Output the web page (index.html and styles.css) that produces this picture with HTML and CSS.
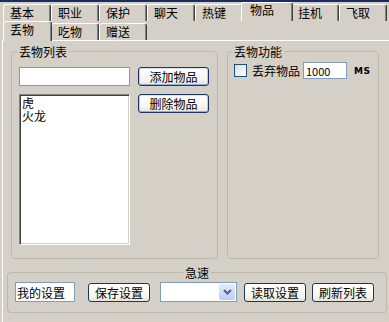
FILE: index.html
```html
<!DOCTYPE html>
<html>
<head>
    <meta charset="utf-8">
    <title>物品设置</title>
    <link rel="stylesheet" href="styles.css">
</head>
<body>
    <div class="titlebar"></div>

    <div class="tabs outer">
        <div class="tab">基本</div>
        <div class="tab">职业</div>
        <div class="tab">保护</div>
        <div class="tab">聊天</div>
        <div class="tab">热键</div>
        <div class="tab active">物品</div>
        <div class="tab">挂机</div>
        <div class="tab">飞取</div>
    </div>

    <div class="tabs inner">
        <div class="tab active">丢物</div>
        <div class="tab">吃物</div>
        <div class="tab">赠送</div>
    </div>

    <div class="page">
        <div class="groups">
            <fieldset class="group list-group">
                <legend>丢物列表</legend>
                <div class="list-grid">
                    <input class="field item-name" type="text">
                    <button class="btn focus">添加物品</button>
                    <div class="listbox">
                        <div>虎</div>
                        <div>火龙</div>
                    </div>
                    <button class="btn focus">删除物品</button>
                </div>
            </fieldset>

            <fieldset class="group func-group">
                <legend>丢物功能</legend>
                <div class="drop-row">
                    <span class="check"></span>
                    <span class="drop-label">丢弃物品</span>
                    <input class="field delay" type="text" value="1000">
                    <span class="unit">MS</span>
                </div>
            </fieldset>
        </div>

        <fieldset class="group speed">
            <legend>急速</legend>
            <div class="bottom-row">
                <input class="field config-name" type="text" value="我的设置">
                <button class="btn">保存设置</button>
                <div class="combo">
                    <span class="combo-btn">
                        <svg width="9" height="6" viewBox="0 0 9 6"><path d="M1 1 L4.5 4.5 L8 1" fill="none" stroke="#4d6185" stroke-width="2"/></svg>
                    </span>
                </div>
                <button class="btn">读取设置</button>
                <button class="btn">刷新列表</button>
            </div>
        </fieldset>
    </div>
</body>
</html>
```

FILE: styles.css
```css
* {
    box-sizing: border-box;
}

body {
    margin: 0;
    width: 389px;
    height: 322px;
    overflow: hidden;
    background-color: #d4d0c8;
    font-family: "Noto Sans CJK SC", "Liberation Sans", sans-serif;
    font-size: 12px;
    color: #000;
}

.titlebar {
    height: 2px;
    background-color: #1a2d63;
}

/* tab strips */
.tabs {
    display: flex;
    align-items: flex-start;
    padding-left: 3px;
}

.tab {
    width: 48px;
    border-top: 1px solid #fff;
    border-left: 1px solid #fff;
    border-right: 1px solid #404040;
    border-radius: 3px 3px 0 0;
    box-shadow: inset -1px 0 #808080;
    background-color: #d4d0c8;
    line-height: 12px;
    padding-left: 6px;
}

.outer .tab {
    margin-top: 2px;
    height: 17px;
    padding-top: 2px;
}

.outer .tab.active {
    margin: 0 -2px;
    width: 52px;
    height: 19px;
    padding-top: 1px;
    padding-left: 8px;
    position: relative;
    z-index: 1;
}

.inner .tab {
    margin-top: 2px;
    height: 17px;
    padding-top: 2px;
}

.inner .tab.active {
    margin: 0 -1px -1px 0;
    width: 49px;
    height: 20px;
    padding-top: 2px;
    position: relative;
    z-index: 1;
}

/* page body */
.page {
    margin-left: 2px;
    height: 282px;
    border-top: 1px solid #fff;
    border-left: 1px solid #fff;
}

.groups {
    display: flex;
    gap: 9px;
    margin: 3px 0 0 8px;
}

.group {
    margin: 0;
    min-width: 0;
    border: 1px solid #bcb8ae;
    border-radius: 4px;
}

.group legend {
    padding: 0 2px;
    margin-left: -2px;
    line-height: 15px;
}

.list-group {
    width: 207px;
    padding: 8px 8px 13px 7px;
}

.func-group {
    width: 152px;
    padding: 3px 6px 0 6px;
}

.list-grid {
    display: grid;
    grid-template-columns: 111px 71px;
    grid-template-rows: 19px 151px;
    column-gap: 8px;
    row-gap: 8px;
}

.field {
    display: block;
    margin: 0;
    border: 1px solid #7f9db9;
    background-color: #fff;
    font-family: inherit;
    font-size: 12px;
    padding: 0 1px;
    outline: none;
}

.btn {
    display: block;
    margin: 0;
    height: 19px;
    padding: 0;
    border: 1px solid #1e3563;
    border-radius: 3px;
    background: linear-gradient(#fff, #f6f5f0 70%, #e6e3d8);
    font-family: inherit;
    font-size: 12px;
    line-height: 15px;
    color: #000;
}

.btn.focus {
    box-shadow: inset 1px 0 #b6cbf0, inset -1px 0 #b6cbf0, inset 0 -1px #8faee6, inset 0 1px #d6e2f8;
}

.list-grid .btn {
    width: 71px;
}

.listbox {
    border: 1px solid;
    border-color: #808080 #fff #fff #808080;
    box-shadow: inset 1px 1px #404040, inset -1px -1px #d4d0c8;
    background-color: #fff;
    padding: 1px 0 0 2px;
    line-height: 13px;
}

.drop-row {
    display: flex;
    align-items: center;
    height: 17px;
}

.check {
    width: 13px;
    height: 13px;
    border: 1px solid #1c5180;
    background: linear-gradient(135deg, #dcdcd7, #fff);
}

.drop-label {
    margin-left: 5px;
    line-height: 12px;
}

.delay {
    width: 44px;
    height: 17px;
    margin-left: 3px;
    padding-left: 2px;
    font-size: 11px;
}

.unit {
    margin-left: 7px;
    font-family: "DejaVu Sans", sans-serif;
    font-size: 9px;
    font-weight: bold;
    letter-spacing: 0.5px;
}

/* bottom bar */
.speed {
    width: 380px;
    margin: 6px 0 0 4px;
    padding: 2px 7px 10px 7px;
}

.speed legend {
    margin: 0 auto;
}

.bottom-row {
    display: flex;
    align-items: flex-start;
    height: 20px;
}

.config-name {
    width: 60px;
    height: 20px;
}

.bottom-row .btn {
    width: 62px;
    margin-top: 1px;
}

.bottom-row .btn:nth-of-type(1) {
    margin-left: 13px;
}

.combo {
    display: flex;
    justify-content: flex-end;
    width: 77px;
    height: 20px;
    margin: 0 7px 0 10px;
    padding: 1px;
    border: 1px solid #7f9db9;
    background-color: #fff;
}

.combo-btn {
    display: flex;
    align-items: center;
    justify-content: center;
    width: 16px;
    border-radius: 2px;
    background: linear-gradient(#e3ecfd, #b9cefa);
}

.bottom-row .btn:last-child {
    margin-left: 6px;
}
```
